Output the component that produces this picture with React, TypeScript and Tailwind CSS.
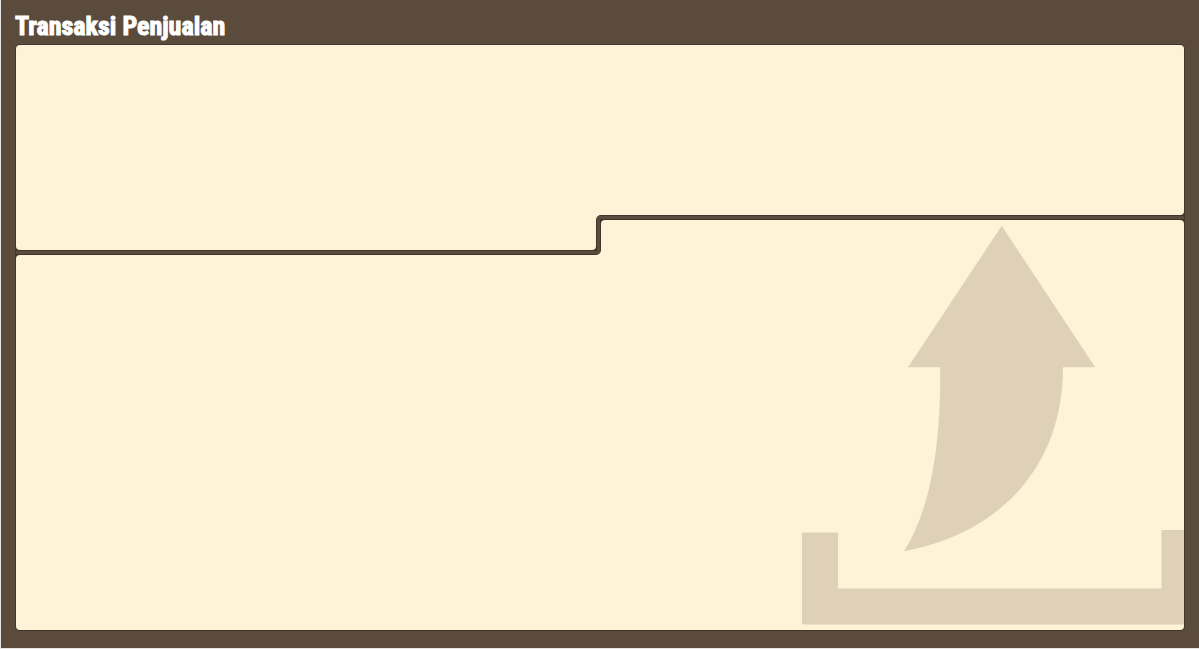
function ExportMark() {
  return (
    <svg
      aria-hidden="true"
      viewBox="801 225 383 400"
      className="z-10 col-start-3 row-start-3 row-end-6 mb-[5px] h-[400px] w-[383px] self-end justify-self-end fill-[#dfd1b7]"
    >
      <path d="M1001.7 225.8 L1095.2 367.3 H1063 C1063 466 1001 533 904 551.3 C930 510 941 448 940.2 367.3 H908 Z" />
      <path d="M802 532.6 H838 V588.4 H1161.5 V530 H1184 V624.5 H802 Z" />
    </svg>
  );
}

export default function App() {
  return (
    <main className="flex min-h-screen flex-col border-b border-l border-[#e8e6e3] bg-[#5b4b3c] px-[14px] pb-[17px]">
      <h1 className="flex h-11 items-center pt-2 font-['Impact','Roboto_Condensed','Liberation_Sans_Narrow',sans-serif] text-[26px] leading-8 font-bold whitespace-nowrap text-white [-webkit-text-stroke:1px_white]">
        Transaksi Penjualan
      </h1>
      <div className="grid flex-1 grid-cols-[580fr_5px_583fr] grid-rows-[170px_5px_30px_5px_1fr] rounded-[5px] bg-[#40362e] p-px">
        <section
          aria-label="Transaksi"
          className="col-span-3 col-start-1 row-start-1 rounded-t-[4px] rounded-br-[4px] bg-[#fef2d7]"
        />
        <div className="col-start-1 row-start-2 row-end-4 rounded-b-[4px] bg-[#fef2d7]" />

        <section
          aria-label="Penjualan"
          className="col-span-3 col-start-1 row-start-5 rounded-tl-[4px] rounded-b-[4px] bg-[#fef2d7]"
        />
        <div className="col-start-3 row-start-3 row-end-5 rounded-t-[4px] bg-[#fef2d7]" />

        <div className="col-start-2 row-start-2 row-end-5 bg-[#fef2d7]">
          <div className="h-full rounded-tl-[5px] rounded-br-[5px] border border-[#40362e] bg-[#5b4b3c]" />
        </div>
        <div className="col-start-3 row-start-2 -ml-px border-y border-[#40362e] bg-[#5b4b3c]" />
        <div className="col-start-1 row-start-4 -mr-px border-y border-[#40362e] bg-[#5b4b3c]" />

        <ExportMark />
      </div>
    </main>
  );
}
